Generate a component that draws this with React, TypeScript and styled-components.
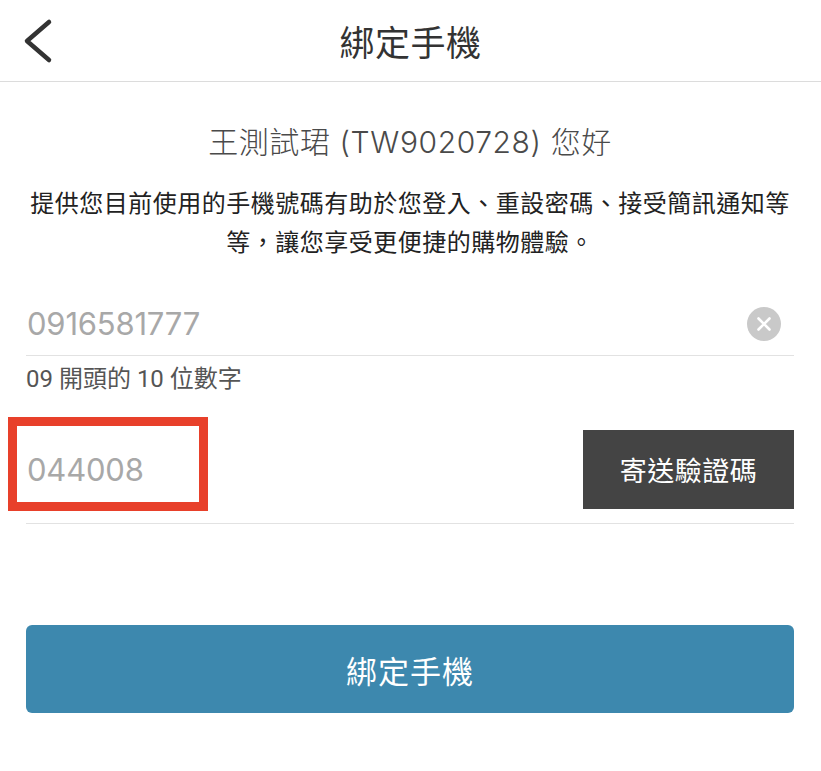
import React from "react";
import styled, { createGlobalStyle } from "styled-components";

const Global = createGlobalStyle`
  html, body { margin: 0; padding: 0; background: #fff; }
  body { font-family: Roboto, "Noto Sans CJK TC", sans-serif; -webkit-font-smoothing: antialiased; }
  * { box-sizing: border-box; }
`;

const Page = styled.div`
  width: 821px;
  min-height: 771px;
  background: #fff;
`;

const Header = styled.header`
  height: 82px;
  border-bottom: 1px solid #dcdcdc;
  display: grid;
  grid-template-columns: 90px 1fr 90px;
  align-items: center;
`;

const BackButton = styled.button`
  border: 0;
  background: none;
  padding: 0 0 0 20px;
  height: 80px;
  display: flex;
  align-items: center;
  cursor: pointer;
`;

const Title = styled.h1`
  margin: 0;
  text-align: center;
  font-family: "Noto Sans CJK TC", sans-serif;
  font-weight: 400;
  font-size: 35px;
  letter-spacing: 0.5px;
  color: #333;
  line-height: 80px;
`;

const Body = styled.main`
  padding: 0 27px 0 26px;
  display: flex;
  flex-direction: column;
`;

const Greeting = styled.p`
  margin: 40px 0 0;
  text-align: center;
  font-family: Inter, "Noto Sans CJK TC", sans-serif;
  font-size: 30px;
  font-weight: 300;
  letter-spacing: 0.6px;
  line-height: 40px;
  color: #4a4a4a;
`;

const Intro = styled.p`
  margin: 20px 0 0;
  text-align: center;
  font-family: "Noto Sans CJK TC", sans-serif;
  font-size: 24px;
  letter-spacing: 0.5px;
  line-height: 39px;
  color: #222;
`;

const FieldRow = styled.div<{ $top: number; $pad?: number }>`
  position: relative;
  margin-top: ${(p) => p.$top}px;
  padding-bottom: ${(p) => p.$pad ?? 0}px;
  min-height: 64px;
  display: flex;
  align-items: center;
  justify-content: space-between;
  border-bottom: 1px solid #e2e2e2;
`;

const FieldText = styled.span`
  font-family: Inter, Roboto, sans-serif;
  font-size: 31px;
  font-weight: 400;
  letter-spacing: -0.2px;
  color: #a8a8a8;
  padding-left: 1px;
`;

const ClearIcon = styled.span`
  width: 34px;
  height: 34px;
  margin-right: 13px;
  display: flex;
`;

const Hint = styled.div`
  margin-top: 8px;
  font-size: 24px;
  font-weight: 400;
  line-height: 30px;
  color: #555;
`;

const SendButton = styled.button`
  width: 211px;
  height: 79px;
  border: 0;
  background: #444;
  color: #fff;
  font-family: "Noto Sans CJK TC", sans-serif;
  font-size: 27px;
  letter-spacing: 0.5px;
  cursor: pointer;
`;

const Highlight = styled.div`
  position: absolute;
  left: -18px;
  top: -13px;
  width: 200px;
  height: 94px;
  border: 9px solid #e8402a;
  pointer-events: none;
`;

const SubmitButton = styled.button`
  margin-top: 101px;
  height: 88px;
  width: 100%;
  border: 0;
  border-radius: 6px;
  background: #3d88ae;
  color: #fff;
  font-family: "Noto Sans CJK TC", sans-serif;
  font-size: 31px;
  letter-spacing: 1px;
  cursor: pointer;
`;

export default function App() {
  return (
    <Page>
      <Global />
      <Header>
        <BackButton aria-label="back">
          <svg width="34" height="46" viewBox="0 0 34 46">
            <polyline
              points="29,4 7,23 29,42"
              fill="none"
              stroke="#333"
              strokeWidth="4.5"
              strokeLinecap="round"
              strokeLinejoin="round"
            />
          </svg>
        </BackButton>
        <Title>綁定手機</Title>
        <div />
      </Header>
      <Body>
        <Greeting>王測試珺 (TW9020728) 您好</Greeting>
        <Intro>提供您目前使用的手機號碼有助於您登入、重設密碼、接受簡訊通知等等，讓您享受更便捷的購物體驗。</Intro>
        <FieldRow $top={32}>
          <FieldText>0916581777</FieldText>
          <ClearIcon>
            <svg width="34" height="34" viewBox="0 0 34 34">
              <circle cx="17" cy="17" r="17" fill="#c9c9c9" />
              <path d="M11.5 11.5 L22.5 22.5 M22.5 11.5 L11.5 22.5" stroke="#fff" strokeWidth="2.6" strokeLinecap="round" />
            </svg>
          </ClearIcon>
        </FieldRow>
        <Hint>09 開頭的 10 位數字</Hint>
        <FieldRow $top={36} $pad={14}>
          <FieldText>044008</FieldText>
          <SendButton>寄送驗證碼</SendButton>
          <Highlight />
        </FieldRow>
        <SubmitButton>綁定手機</SubmitButton>
      </Body>
    </Page>
  );
}
